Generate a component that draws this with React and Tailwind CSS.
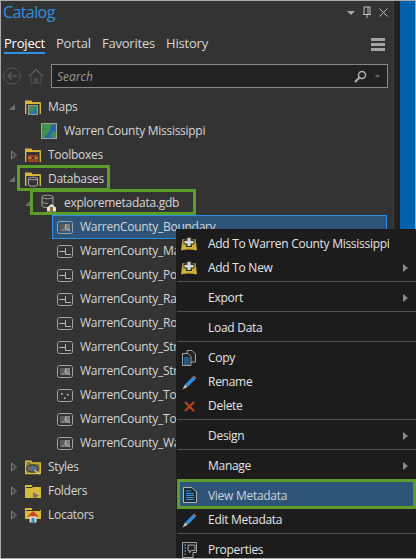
import React from "react";

const FONT = { fontFamily: '"Open Sans", "Noto Sans", sans-serif' };

// Small icons
const Expanded = () => (
  <svg width="8" height="8" viewBox="0 0 8 8"><path d="M7 1V7H1Z" fill="#6f6f6f" /></svg>
);
const Collapsed = () => (
  <svg width="8" height="10" viewBox="0 0 8 10" className="ml-[3px]"><path d="M1.5 1L6.5 5L1.5 9Z" fill="#3f3f3f" stroke="#7d7d7d" /></svg>
);

const Folder = ({ children }) => (
  <svg width="16" height="15" viewBox="0 0 16 15">
    <path d="M.7 14V1.2H6L7 3H15.3V14" fill="#333" stroke="#d8bb3c" strokeWidth="1.4" />
    <path d="M1 4H15V2.5H7L6 1H1Z" fill="#d8bb3c" />
    {children}
  </svg>
);

const MapFolder = () => (
  <Folder>
    <rect x="3.5" y="5.5" width="9" height="9" fill="#3f8f4a" stroke="#9a9a9a" />
    <path d="M5 14L11.5 7V14Z" fill="#2b6fb5" />
  </Folder>
);
const ToolFolder = () => (
  <Folder>
    <path d="M3 7H13V14H3Z" fill="#9c3f22" />
    <path d="M3 10H13" stroke="#d8bb3c" />
    <path d="M6.5 9H9.5V11H6.5Z" fill="#333" />
  </Folder>
);
const DbFolder = () => (
  <Folder>
    <path d="M3.5 6.5C3.5 4.8 12.5 4.8 12.5 6.5V13C12.5 14.6 3.5 14.6 3.5 13Z" fill="#333" stroke="#a8a8a8" />
    <path d="M3.5 6.5C3.5 8.2 12.5 8.2 12.5 6.5" fill="none" stroke="#a8a8a8" />
  </Folder>
);
const StyleFolder = () => (
  <svg width="16" height="15" viewBox="0 0 16 15">
    <path d="M.7 13.5V1.2H6L7 3H15.3V13.5Z" fill="#8d7c30" stroke="#d8bb3c" strokeWidth="1.4" />
    <ellipse cx="7.5" cy="8.5" rx="6" ry="3.6" fill="#5d6973" stroke="#2e2e2e" />
    <circle cx="4.5" cy="8.5" r="1" fill="#d24a2b" />
    <circle cx="7.5" cy="7" r="1" fill="#2f8fe0" />
    <path d="M9 10L15 14" stroke="#c9c9c9" strokeWidth="1.4" />
  </svg>
);
const PlainFolder = () => (
  <svg width="16" height="15" viewBox="0 0 16 15">
    <path d="M0 14V1H6.5L7.5 3H16V14Z" fill="#d8bb3c" />
    <path d="M1 3.5H7.5" stroke="#333" />
    <path d="M8 8L14 11.5L8 15Z" fill="#777" />
  </svg>
);
const LocatorFolder = () => (
  <svg width="16" height="16" viewBox="0 0 16 16">
    <path d="M0 12V1H6.5L7.5 3H16V12Z" fill="#d8bb3c" />
    <path d="M1 3.5H15" stroke="#333" />
    <path d="M2 9.5L8 4L14 9.5Z" fill="#c9481f" />
    <path d="M4.5 9.5H11.5V15.5H4.5Z" fill="#d8d8d8" />
    <path d="M6.5 11H9.5V15.5H6.5Z" fill="#2f8fa8" />
  </svg>
);

const MapThumb = () => (
  <svg width="16" height="16" viewBox="0 0 16 16">
    <rect x=".5" y=".5" width="15" height="15" fill="#3f9150" stroke="#a0a0a0" />
    <path d="M3 15L8 9L10 3L13 1H15V15Z" fill="#2a63a8" />
    <path d="M9 14L12 8L15 9V15Z" fill="#3f9150" />
  </svg>
);

const Gdb = () => (
  <svg width="18" height="18" viewBox="0 0 18 18">
    <path d="M2 3C2 .7 13 .7 13 3V12C13 14 2 14 2 12Z" fill="#333" stroke="#a3a3a3" />
    <path d="M2 3C2 5.3 13 5.3 13 3M2 7C2 9 6 9.5 8 9.5" fill="none" stroke="#a3a3a3" />
    <path d="M7 13.5L11.5 10L16 13.5V17.5H7Z" fill="#e0e0e0" />
    <path d="M10 13H13V17.5H10Z" fill="#8f6a2e" />
  </svg>
);

const FcFrame = ({ children }) => (
  <svg width="16" height="13" viewBox="0 0 16 13">
    <rect x=".5" y=".5" width="15" height="12" rx="2" fill="none" stroke="#a3a3a3" />
    {children}
  </svg>
);
const PolygonFc = () => (
  <FcFrame>
    <rect x="3" y="3" width="10" height="7" fill="#7e7e7e" />
    <path d="M3 10L8 6.5L9 3H3Z" fill="#5a5a5a" />
    <path d="M8 6.5L13 10M9 3L8 6.5" stroke="#bcbcbc" />
  </FcFrame>
);
const LineFc = () => (
  <FcFrame><path d="M2 6.5H8.5M8.5 3V9.5H14" fill="none" stroke="#b4b4b4" /></FcFrame>
);
const PointFc = () => (
  <FcFrame>
    <rect x="4" y="4" width="1.5" height="1.5" fill="#cfcfcf" />
    <rect x="10" y="5" width="1.5" height="1.5" fill="#cfcfcf" />
    <rect x="7" y="8.5" width="1.5" height="1.5" fill="#cfcfcf" />
  </FcFrame>
);

const AddIcon = () => (
  <svg width="16" height="14" viewBox="0 0 16 14">
    <path d="M1.5 2C5 3 11 3 14.5 2L16 13.5C11 12 5 12 0 13.5Z" fill="#cdb033" />
    <path d="M5 0H11V2.5H13.5V7.5H11V10H5V7.5H2.5V2.5H5Z" fill="#333" />
    <path d="M6.5 1H9.5V4H12.5V6.5H9.5V9H6.5V6.5H3.5V4H6.5Z" fill="#d8d8d8" />
  </svg>
);
const CopyIcon = () => (
  <svg width="14" height="16" viewBox="0 0 14 16">
    <path d="M5 .5H10L13.5 4V12H5Z" fill="#222" stroke="#a3a3a3" />
    <path d="M.5 3.5H6L9 6.5V15.5H.5Z" fill="#222" stroke="#a3a3a3" />
    <path d="M2 8H7.5M2 10H7.5M2 12H7.5M2 14H7.5" stroke="#2f8fe0" />
  </svg>
);
const PencilIcon = () => (
  <svg width="15" height="15" viewBox="0 0 15 15">
    <path d="M3 9.5L11 1.5L13.5 4L5.5 12Z" fill="#2f8fe0" />
    <path d="M11 1.5L12 .5L14.5 3L13.5 4Z" fill="#c9683f" />
    <path d="M3 9.5L5.5 12L.5 14.5Z" fill="#c9c2a5" />
  </svg>
);
const DeleteIcon = () => (
  <svg width="11" height="11" viewBox="0 0 11 11">
    <path d="M1 1L10 10M10 1L1 10" stroke="#b9451f" strokeWidth="2.2" />
  </svg>
);
const MetadataIcon = () => (
  <svg width="14" height="16" viewBox="0 0 14 16">
    <path d="M.5 .5H9L13.5 5V15.5H.5Z" fill="#1d2a38" stroke="#b5b5b5" />
    <path d="M3 4H8M3 6.5H11M3 8.5H11M3 10.5H11M3 12.5H11" stroke="#2f9be8" />
  </svg>
);
const PropertiesIcon = () => (
  <svg width="15" height="16" viewBox="0 0 15 16">
    <path d="M.5 .5H14.5V10.5H11V15.5H.5Z" fill="none" stroke="#a3a3a3" />
    <path d="M2.5 3H4M2.5 6H4M2.5 9H4M2.5 12H4" stroke="#2f9be8" strokeWidth="1.4" />
    <path d="M6 3H13V8.5H9L7.5 11V8.5H6Z" fill="#222" stroke="#a3a3a3" />
  </svg>
);

// Catalog tree rows
const TreeRow = ({ indent, arrow, icon, label }) => (
  <div className={`h-6 flex items-center shrink-0 text-[12px] tracking-[-0.28px] text-[#d6d6d6] ${indent}`}>
    {arrow !== undefined && (
      <span className="w-[18px] flex justify-center shrink-0">{arrow}</span>
    )}
    <span className="w-6 flex justify-center shrink-0">{icon}</span>
    <span className="ml-[3px] whitespace-nowrap">{label}</span>
  </div>
);

const FeatureRow = ({ icon, label }) => (
  <div className="h-6 pl-[52px] flex items-center shrink-0 text-[12px] tracking-[-0.28px] text-[#d6d6d6]">
    <span className="w-[23px] flex justify-center shrink-0">{icon}</span>
    <span className="ml-[4px] whitespace-nowrap">{label}</span>
  </div>
);

const features = [
  ["WarrenCounty_Ma", <LineFc />],
  ["WarrenCounty_Po", <LineFc />],
  ["WarrenCounty_Ra", <LineFc />],
  ["WarrenCounty_Ro", <LineFc />],
  ["WarrenCounty_Str", <LineFc />],
  ["WarrenCounty_Str", <PolygonFc />],
  ["WarrenCounty_To", <PointFc />],
  ["WarrenCounty_To", <PolygonFc />],
  ["WarrenCounty_Wa", <PolygonFc />],
];

// Context menu
const MenuItem = ({ icon, label, submenu }) => (
  <div className="h-6 flex items-center text-[12px] tracking-[-0.28px] text-[#e4e4e4]">
    <span className="w-[26px] flex justify-center shrink-0">{icon}</span>
    <span className="ml-[6px] whitespace-nowrap grow">{label}</span>
    {submenu && (
      <svg width="5" height="8" viewBox="0 0 5 8" className="mr-[8px]"><path d="M0 0L5 4L0 8Z" fill="#8a8a8a" /></svg>
    )}
  </div>
);
const Sep = () => <div className="h-[1px] mt-[1px] mb-[4px] bg-[#505050] ml-[1px]" />;

const ContextMenu = () => (
  <div className="absolute left-[175px] top-[228px] right-0 bottom-0 bg-[#1c1c1c] pt-[3px] overflow-hidden">
    <MenuItem icon={<AddIcon />} label="Add To Warren County Mississippi" />
    <MenuItem icon={<AddIcon />} label="Add To New" submenu />
    <Sep />
    <MenuItem label="Export" submenu />
    <Sep />
    <MenuItem label="Load Data" />
    <Sep />
    <MenuItem icon={<CopyIcon />} label="Copy" />
    <MenuItem icon={<PencilIcon />} label="Rename" />
    <MenuItem icon={<DeleteIcon />} label="Delete" />
    <Sep />
    <MenuItem label="Design" submenu />
    <Sep />
    <MenuItem label="Manage" submenu />
    <div className="h-[30px] mt-[1px] -mb-[1px] ml-[1px] border-[3px] border-[#5c9c2a] bg-[#2f5479] flex items-center text-[12px] tracking-[-0.28px] text-[#c9d3dc]">
      <span className="w-[19px] flex justify-center shrink-0 pt-[2px]"><MetadataIcon /></span>
      <span className="ml-[9px] pt-[4px]">View Metadata</span>
    </div>
    <MenuItem icon={<PencilIcon />} label="Edit Metadata" />
    <Sep />
    <MenuItem icon={<PropertiesIcon />} label="Properties" />
  </div>
);

export default function App() {
  return (
    <div
      className="relative w-[416px] h-[559px] overflow-hidden flex bg-[#333333] border-t border-l border-b border-[#a9a9a9]"
      style={FONT}
    >
      <div className="w-[392px] shrink-0 flex flex-col">
        {/* Title bar */}
        <div className="h-[22px] flex items-center pl-[2px] pr-[5px] shrink-0">
          <span className="text-[16px] tracking-[-0.6px] text-[#2f8fe0] grow">Catalog</span>
          <svg width="8" height="4" viewBox="0 0 8 4" className="mr-2 mt-[1px]"><path d="M0 0H8L4 4Z" fill="#a8a8a8" /></svg>
          <svg width="8" height="12" viewBox="0 0 8 12" className="mr-2"><path d="M1 8V1H7V8M0 8.5H8M4 8.5V12M5 1V8" fill="none" stroke="#bcbcbc" /></svg>
          <svg width="9" height="9" viewBox="0 0 9 9"><path d="M.5.5L8.5 8.5M8.5.5L.5 8.5" stroke="#bcbcbc" /></svg>
        </div>

        {/* Tabs */}
        <div className="h-[32px] flex items-start gap-[11px] pl-[3px] pr-[8px] pt-[11px] shrink-0 text-[13px] tracking-[-0.2px] leading-[18px] text-[#d6d6d6]">
          <span className="border-b-2 border-[#2f8fe0] h-5 text-white">Project</span>
          <span>Portal</span>
          <span>Favorites</span>
          <span>History</span>
          <div className="ml-auto mt-[4px] flex flex-col gap-[2px]">
            <div className="w-[14px] h-[3px] bg-[#a3a3a3]" />
            <div className="w-[14px] h-[3px] bg-[#a3a3a3]" />
            <div className="w-[14px] h-[3px] bg-[#a3a3a3]" />
          </div>
        </div>

        {/* Search */}
        <div className="h-6 mt-[9px] flex items-center pl-[2px] pr-[5px] shrink-0">
          <svg width="18" height="18" viewBox="0 0 18 18">
            <circle cx="9" cy="9" r="8.2" fill="none" stroke="#565656" />
            <path d="M14 9H5M8.5 5.5L5 9L8.5 12.5" fill="none" stroke="#565656" strokeWidth="1.6" />
          </svg>
          <svg width="16" height="16" viewBox="0 0 16 16" className="ml-[7px]">
            <path d="M1 8L8 1.5L15 8" fill="none" stroke="#5c5c5c" strokeWidth="1.4" />
            <path d="M3 8V15H13V8" fill="none" stroke="#555" />
            <path d="M6 10H10V15H6Z" fill="#3f4f40" />
          </svg>
          <div className="ml-[7px] grow h-6 border border-[#868686] bg-[#222222] flex items-center pl-[5px] pr-[7px]">
            <span className="italic text-[12px] pt-[1px] text-[#9a9a9a] grow">Search</span>
            <svg width="13" height="13" viewBox="0 0 13 13"><circle cx="8" cy="5" r="3.5" fill="none" stroke="#b0b0b0" strokeWidth="1.5" /><path d="M5.5 7.5L1 12" stroke="#b0b0b0" strokeWidth="2" /></svg>
            <svg width="5" height="3" viewBox="0 0 5 3" className="ml-[8px]"><path d="M0 0H5L2.5 3Z" fill="#666" /></svg>
          </div>
        </div>

        {/* Tree */}
        <div className="mt-[7px] flex flex-col">
          <TreeRow indent="pl-[2px]" arrow={<Expanded />} icon={<MapFolder />} label="Maps" />
          <TreeRow indent="pl-[36px]" icon={<MapThumb />} label="Warren County Mississippi" />
          <TreeRow indent="pl-[2px]" arrow={<Collapsed />} icon={<ToolFolder />} label="Toolboxes" />
          <TreeRow indent="pl-[2px]" arrow={<Expanded />} icon={<DbFolder />} label="Databases" />
          <TreeRow indent="pl-[18px]" arrow={<Expanded />} icon={<Gdb />} label="exploremetadata.gdb" />
          <div className="pl-[51px] pr-[6px]">
            <div className="h-6 flex items-center bg-[#2f5479] border border-[#2d8fe8] text-[12px] tracking-[-0.28px] text-[#d6d6d6]">
              <span className="w-[23px] flex justify-center shrink-0"><PolygonFc /></span>
              <span className="ml-[4px]">WarrenCounty_Boundary</span>
            </div>
          </div>
          {features.map(([label, icon], i) => (
            <FeatureRow key={i} icon={icon} label={label} />
          ))}
          <TreeRow indent="pl-[2px]" arrow={<Collapsed />} icon={<StyleFolder />} label="Styles" />
          <TreeRow indent="pl-[2px]" arrow={<Collapsed />} icon={<PlainFolder />} label="Folders" />
          <TreeRow indent="pl-[2px]" arrow={<Collapsed />} icon={<LocatorFolder />} label="Locators" />
        </div>
      </div>

      {/* Docked pane edge */}
      <div className="w-[7px] shrink-0 bg-[#222222] border-l border-[#3d3d3d]" />
      <div className="w-[15px] shrink-0 bg-[#0061ae]" />
      <div className="w-[1px] shrink-0 bg-[#a9a9a9]" />

      {/* Highlights */}
      <div className="absolute left-[16px] top-[164px] w-[93px] h-[26px] border-[3px] border-[#5c9c2a]" />
      <div className="absolute left-[29px] top-[188px] w-[166px] h-[26px] border-[3px] border-[#5c9c2a]" />

      <ContextMenu />
    </div>
  );
}
